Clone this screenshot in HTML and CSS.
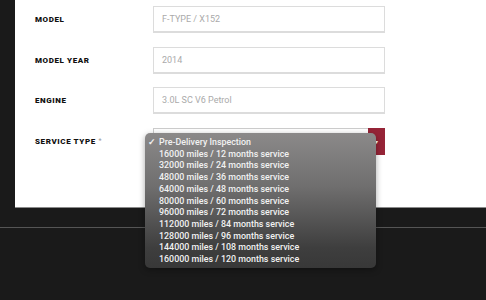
FILE: index.html
```html
<!DOCTYPE html>
<html lang="en">
<head>
    <meta charset="UTF-8">
    <meta name="viewport" content="width=device-width, initial-scale=1.0">
    <title>Service Booking</title>
    <link rel="stylesheet" href="styles.css">
</head>
<body>
    <div class="panel">
        <div class="row">
            <label class="label">Model</label>
            <div class="field">F-TYPE / X152</div>
        </div>
        <div class="row">
            <label class="label">Model Year</label>
            <div class="field">2014</div>
        </div>
        <div class="row">
            <label class="label">Engine</label>
            <div class="field">3.0L SC V6 Petrol</div>
        </div>
        <div class="row">
            <label class="label">Service Type <span class="req">*</span></label>
            <div class="field select">
                <span class="arrow">&#9662;</span>
            </div>
        </div>
    </div>
    <div class="footer"></div>

    <!-- open native select list -->
    <ul class="popup">
        <li class="checked">Pre-Delivery Inspection</li>
        <li>16000 miles / 12 months service</li>
        <li>32000 miles / 24 months service</li>
        <li>48000 miles / 36 months service</li>
        <li>64000 miles / 48 months service</li>
        <li>80000 miles / 60 months service</li>
        <li>96000 miles / 72 months service</li>
        <li>112000 miles / 84 months service</li>
        <li>128000 miles / 96 months service</li>
        <li>144000 miles / 108 months service</li>
        <li>160000 miles / 120 months service</li>
    </ul>
</body>
</html>
```

FILE: styles.css
```css
body{
    margin: 0;
    background-color: #1a1a1a;
    font-family: 'Roboto', sans-serif;
    height: 300px;
    overflow: hidden;
}
.panel{
    margin-left: 15px;
    background: #fff;
    border-bottom: 1px solid #8a8a8a;
    padding: 6px 0 0 20px;
    height: 201px;
}
.row{
    display: flex;
    align-items: center;
    margin-bottom: 13.5px;
}
.label{
    width: 118px;
    font-size: 8px;
    font-weight: 900;
    letter-spacing: 0.6px;
    text-transform: uppercase;
    color: #111;
}
.req{
    color: #999;
    font-weight: 400;
    font-size: 7px;
    vertical-align: 1px;
}
.field{
    box-sizing: border-box;
    width: 232px;
    height: 27px;
    border: 1px solid #dcdcdc;
    border-bottom-width: 2px;
    padding: 0 8px;
    display: flex;
    align-items: center;
    font-size: 9px;
    color: #aaa;
}
.select{
    position: relative;
    border-color: #ccc;
}
.arrow{
    position: absolute;
    right: -1px;
    top: -1px;
    width: 17px;
    height: 27px;
    background: #962437;
    color: #fff;
    font-size: 6px;
    display: flex;
    align-items: center;
    justify-content: center;
}
.footer{
    margin-top: 19px;
    border-top: 1px solid #555;
}
.popup{
    position: absolute;
    left: 145px;
    top: 133px;
    width: 231px;
    height: 135px;
    box-sizing: border-box;
    margin: 0;
    padding: 4px 0 0 14px;
    list-style: none;
    border-radius: 5px;
    background: linear-gradient(#8b8989, #6f6e6e 40%, #3e3e3e 85%, #383838);
    box-shadow: 0 2px 6px rgba(0, 0, 0, 0.35);
    font-family: 'Roboto', sans-serif;
    font-size: 8.9px;
    font-weight: 500;
    line-height: 11.7px;
    color: #f2f2f2;
}
.checked{
    position: relative;
}
.checked::before{
    content: "\2713";
    position: absolute;
    left: -11px;
    font-weight: 700;
}
```
